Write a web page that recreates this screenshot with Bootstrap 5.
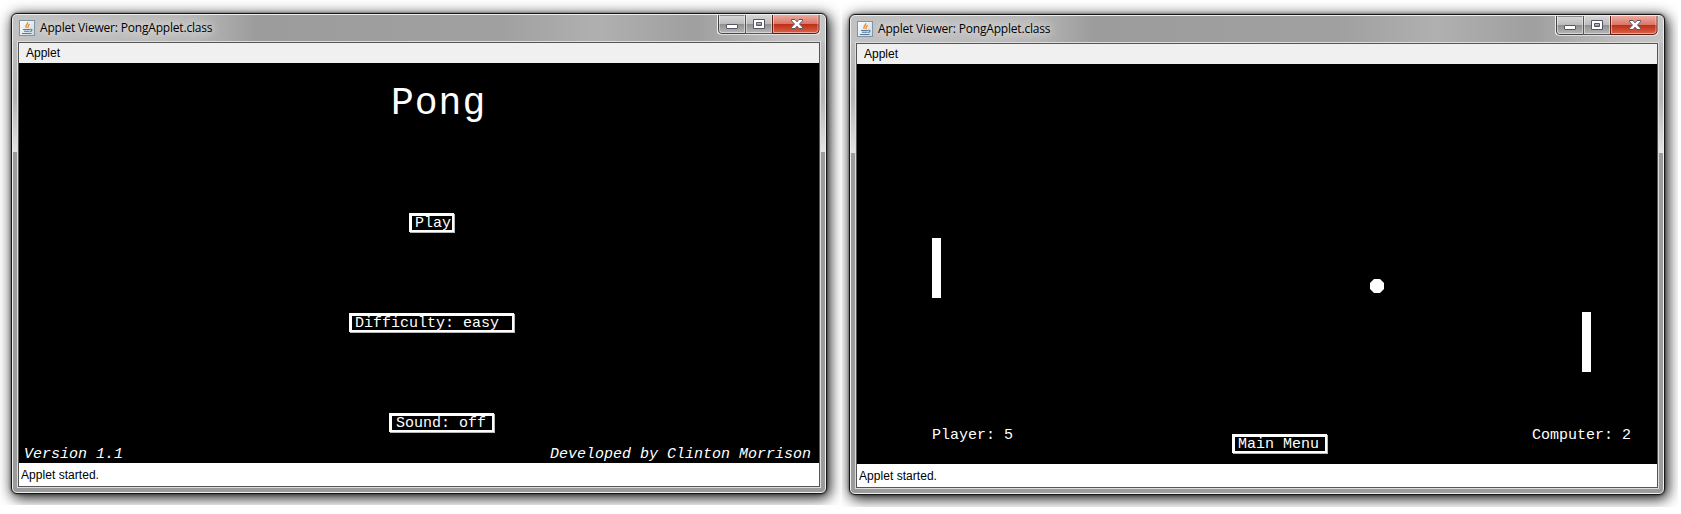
<!DOCTYPE html>
<html lang="en">
<head>
<meta charset="utf-8">
<title>Applet Viewer: PongApplet.class</title>
<link href="https://cdn.jsdelivr.net/npm/bootstrap@5.3.0/dist/css/bootstrap.min.css" rel="stylesheet">
<style>
body{font-family:"Liberation Sans",Arial,sans-serif;font-size:12px;line-height:16px;color:#000;background:#fff;height:514px}
.shot{width:842px;height:505px;padding:13px 0 0 11px}
.shot-b{width:836px;height:507px;padding:14px 0 0 7px}
.win{width:816px;height:481px;border:1px solid #161616;border-radius:6px;padding:1px;box-shadow:0 0 3px rgba(0,0,0,.55),2px 3px 14px 1px rgba(0,0,0,.9);
 background:#eee}
.frame{height:477px;border-radius:4px;padding:0 4px 4px;
 background:
 linear-gradient(#bdbdbd,#b4b4b4 50%,#e4e4e4) 0 27px/4px 110px no-repeat,
 linear-gradient(#bdbdbd,#b4b4b4 50%,#e4e4e4) 100% 27px/4px 110px no-repeat,
 linear-gradient(90deg,#c2c2c2,#b8b8b8 22%,#9c9c9c 30%,#a0a0a0 60%,#b0b0b0 72%,#9f9f9f 84%,#bcbcbc 94%,#c6c6c6) 0 0/100% 27px no-repeat,
 #9c9c9c}
.titlebar{height:26px;padding-left:2px}
.titlebar svg{display:block}
.app-ico{margin-top:5px}
.caption{font-family:"Open Sans","Noto Sans",sans-serif;font-size:12px;line-height:16px;margin:5px 0 0 5px;letter-spacing:-.19px;white-space:nowrap;text-shadow:0 0 6px #ddd,0 0 8px #ddd,0 0 12px #ddd}
.inner{border:1px solid #ddd}
.pane{border:1px solid #555}
.menubar{height:20px;background:#f0f0f0;padding:2px 0 0 7px}
.stage{width:800px;height:400px;background:#000;color:#fff;font:15px/17px "Liberation Mono","Courier New",monospace}
.status{height:23px;background:#fff;padding:4px 0 0 2px;letter-spacing:.04px}
.heading{font-size:38px;letter-spacing:1px;line-height:46px;padding:18px 0 0 372px;height:150px}
.key{height:19px;border:3px solid #fff;border-right-width:2px;border-bottom-width:2px;box-shadow:1px 1px 0 #b8b8b8;line-height:15px;padding-left:3px;white-space:nowrap}
.k-play{width:45px;margin:0 0 81px 390px}
.k-diff{width:165px;margin:0 0 81px 330px}
.k-sound{width:105px;margin:0 0 14px 370px;padding-left:4px}
.k-menu{width:95px;left:375px;top:370px}
.credits{font-style:italic;padding:0 8px 0 5px}
.paddle{width:9px;height:60px;background:#fff}
</style>
</head>
<body class="d-flex align-items-start overflow-hidden">
<svg width="0" height="0" class="position-absolute"><defs>
<linearGradient id="g" x2="0" y2="1"><stop offset="0" stop-color="#d8d8d8"/><stop offset=".48" stop-color="#bcbcbc"/><stop offset=".5" stop-color="#8f8f8f"/><stop offset="1" stop-color="#b9b9b9"/></linearGradient>
<linearGradient id="r" x2="0" y2="1"><stop offset="0" stop-color="#eeada3"/><stop offset=".48" stop-color="#d97868"/><stop offset=".5" stop-color="#bf2c14"/><stop offset="1" stop-color="#d9674a"/></linearGradient>
<linearGradient id="j" x2="1" y2="1"><stop offset="0" stop-color="#fff"/><stop offset="1" stop-color="#cbd8e2"/></linearGradient>
<symbol id="java" viewBox="0 0 16 16"><rect x=".5" y=".5" width="15" height="15" fill="url(#j)" stroke="#7d93a5"/><path d="M8.600 2.200C9.600 4 5.600 4.800 7.200 8M10.800 4.300C8.200 5.200 9.800 6.300 8.700 8.200" fill="none" stroke="#ee8a2c" stroke-width="1.300"/><path d="M4 9.500h7M5 11.300h5.500M3 13.500h9.500M11.300 9.300c2.500-.5 2 2-.2 2.200" fill="none" stroke="#54799a" stroke-width="1.100"/></symbol>
<symbol id="ctl" viewBox="0 0 104 20"><path d="M.5 0v15.500q0 3.500 3.500 3.500h95q3.500 0 3.500-3.500V0" fill="#eee" stroke="#eee" stroke-width="1.500"/><path d="M1.500 0v15q0 3.500 3 3.500h24V0z" fill="url(#g)" stroke="#444"/><path d="M28.500-.5h27v19h-27z" fill="url(#g)" stroke="#555"/><path d="M55.500-.5v19H98q4 0 4-3.500V-.5z" fill="url(#r)" stroke="#5d1b18"/><path d="M2.500 0v15q0 2.500 2.500 2.500h22.500V0M29.500 0v17.500h25V0M56.500 0v17.500H98q3 0 3-2.500V0" fill="none" stroke="#fff" stroke-opacity=".45"/><rect x="9.500" y="9.500" width="11" height="4" rx=".5" fill="#fff" stroke="#555568"/><path d="M36.500 4.500h11v9h-11zM39.500 7.500v3h5v-3z" fill="#fff" fill-rule="evenodd" stroke="#555568"/><path d="M74.500 4.500h3.500l2 2.300 2-2.300h3.500v1.300l-3 3.200 3 3.200v1.300H82l-2-2.300-2 2.300h-3.500v-1.300l3-3.200-3-3.200z" fill="#fff" stroke="#555568"/></symbol>
</defs></svg>

<section class="shot flex-shrink-0 overflow-hidden">
 <div class="win"><div class="frame">
  <div class="titlebar d-flex">
   <svg class="app-ico" width="16" height="16"><use href="#java"/></svg>
   <div class="caption">Applet Viewer: PongApplet.class</div>
   <svg class="ms-auto" width="104" height="20"><use href="#ctl"/></svg>
  </div>
  <div class="inner"><div class="pane">
   <div class="menubar">Applet</div>
   <div class="stage">
    <div class="heading">Pong</div>
    <div class="key k-play">Play</div>
    <div class="key k-diff">Difficulty: easy</div>
    <div class="key k-sound">Sound: off</div>
    <div class="credits d-flex justify-content-between"><span>Version 1.1</span><span>Developed by Clinton Morrison</span></div>
   </div>
   <div class="status">Applet started.</div>
  </div></div>
 </div></div>
</section>

<section class="shot-b flex-shrink-0 overflow-hidden">
 <div class="win"><div class="frame">
  <div class="titlebar d-flex">
   <svg class="app-ico" width="16" height="16"><use href="#java"/></svg>
   <div class="caption">Applet Viewer: PongApplet.class</div>
   <svg class="ms-auto" width="104" height="20"><use href="#ctl"/></svg>
  </div>
  <div class="inner"><div class="pane">
   <div class="menubar">Applet</div>
   <div class="stage position-relative">
    <div class="paddle position-absolute" style="left:75px;top:174px"></div>
    <div class="paddle position-absolute" style="left:725px;top:248px"></div>
    <svg class="position-absolute" style="left:513px;top:215px" width="14" height="14"><path d="M4 0h6l4 4v6l-4 4H4l-4-4V4z" fill="#fff"/></svg>
    <div class="position-absolute" style="left:75px;top:363px">Player: 5</div>
    <div class="position-absolute" style="left:675px;top:363px">Computer: 2</div>
    <div class="key k-menu position-absolute">Main Menu</div>
   </div>
   <div class="status">Applet started.</div>
  </div></div>
 </div></div>
</section>
<script src="https://cdn.jsdelivr.net/npm/bootstrap@5.3.0/dist/js/bootstrap.bundle.min.js"></script>
</body>
</html>
